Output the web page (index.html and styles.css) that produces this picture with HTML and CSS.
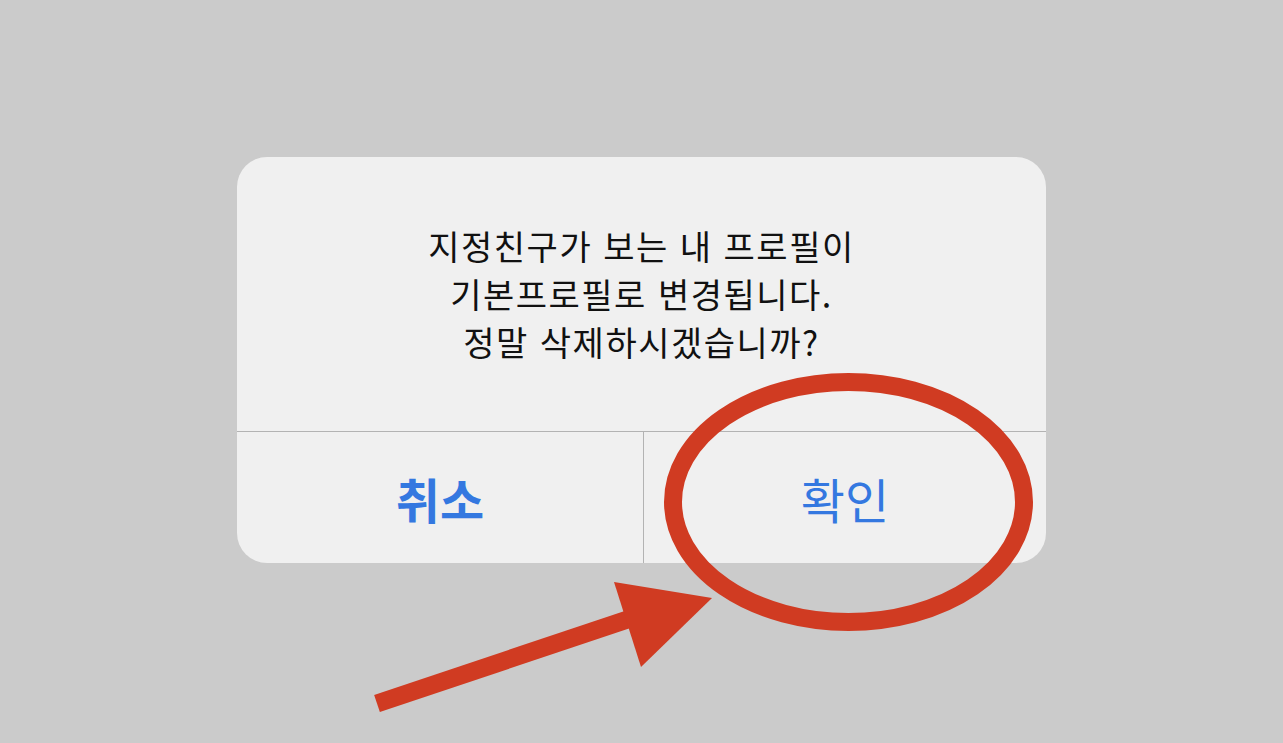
FILE: index.html
```html
<!DOCTYPE html>
<html lang="ko">
<head>
<meta charset="utf-8">
<link rel="stylesheet" href="styles.css">
</head>
<body>
<div class="stage">
  <div class="alert">
    <div class="message">
      <p>지정친구가 보는 내 프로필이</p>
      <p>기본프로필로 변경됩니다.</p>
      <p>정말 삭제하시겠습니까?</p>
    </div>
    <div class="actions">
      <div class="btn btn-cancel">취소</div>
      <div class="btn btn-ok">확인</div>
    </div>
  </div>
  <svg class="markup" width="1283" height="743" viewBox="0 0 1283 743">
    <ellipse cx="848.5" cy="502" rx="175.5" ry="120" fill="none" stroke="#d03b22" stroke-width="18"/>
    <line x1="377" y1="703.5" x2="650" y2="612" stroke="#d03b22" stroke-width="18"/>
    <polygon points="614,582 712,598 641,667" fill="#d03b22"/>
  </svg>
</div>
</body>
</html>
```
FILE: styles.css
```css
html, body {
  margin: 0;
  padding: 0;
}
body {
  background: #cbcbcb;
  font-family: "Noto Sans CJK KR", "Noto Sans", sans-serif;
}
.stage {
  position: relative;
  width: 1283px;
  height: 743px;
  overflow: hidden;
  padding: 157px 0 0 237px;
  box-sizing: border-box;
}
.alert {
  width: 809px;
  height: 406px;
  background: #f0f0f0;
  border-radius: 30px;
  display: flex;
  flex-direction: column;
  overflow: hidden;
}
.message {
  height: 275px;
  display: flex;
  flex-direction: column;
  justify-content: center;
  align-items: center;
  border-bottom: 1px solid #b3b3b3;
  box-sizing: border-box;
  color: #111;
  font-size: 34px;
  line-height: 48px;
  letter-spacing: 1.5px;
  padding-top: 0;
}
.message p {
  margin: 0;
}
.actions {
  flex: 1;
  display: flex;
}
.btn {
  flex: 1;
  display: flex;
  align-items: center;
  justify-content: center;
  color: #3478e0;
  font-size: 48px;
}
.btn-cancel {
  font-weight: 700;
  border-right: 1px solid #b3b3b3;
  flex: 0 0 406px;
}
.btn-ok {
  font-weight: 400;
}
.markup {
  position: absolute;
  left: 0;
  top: 0;
}
```
